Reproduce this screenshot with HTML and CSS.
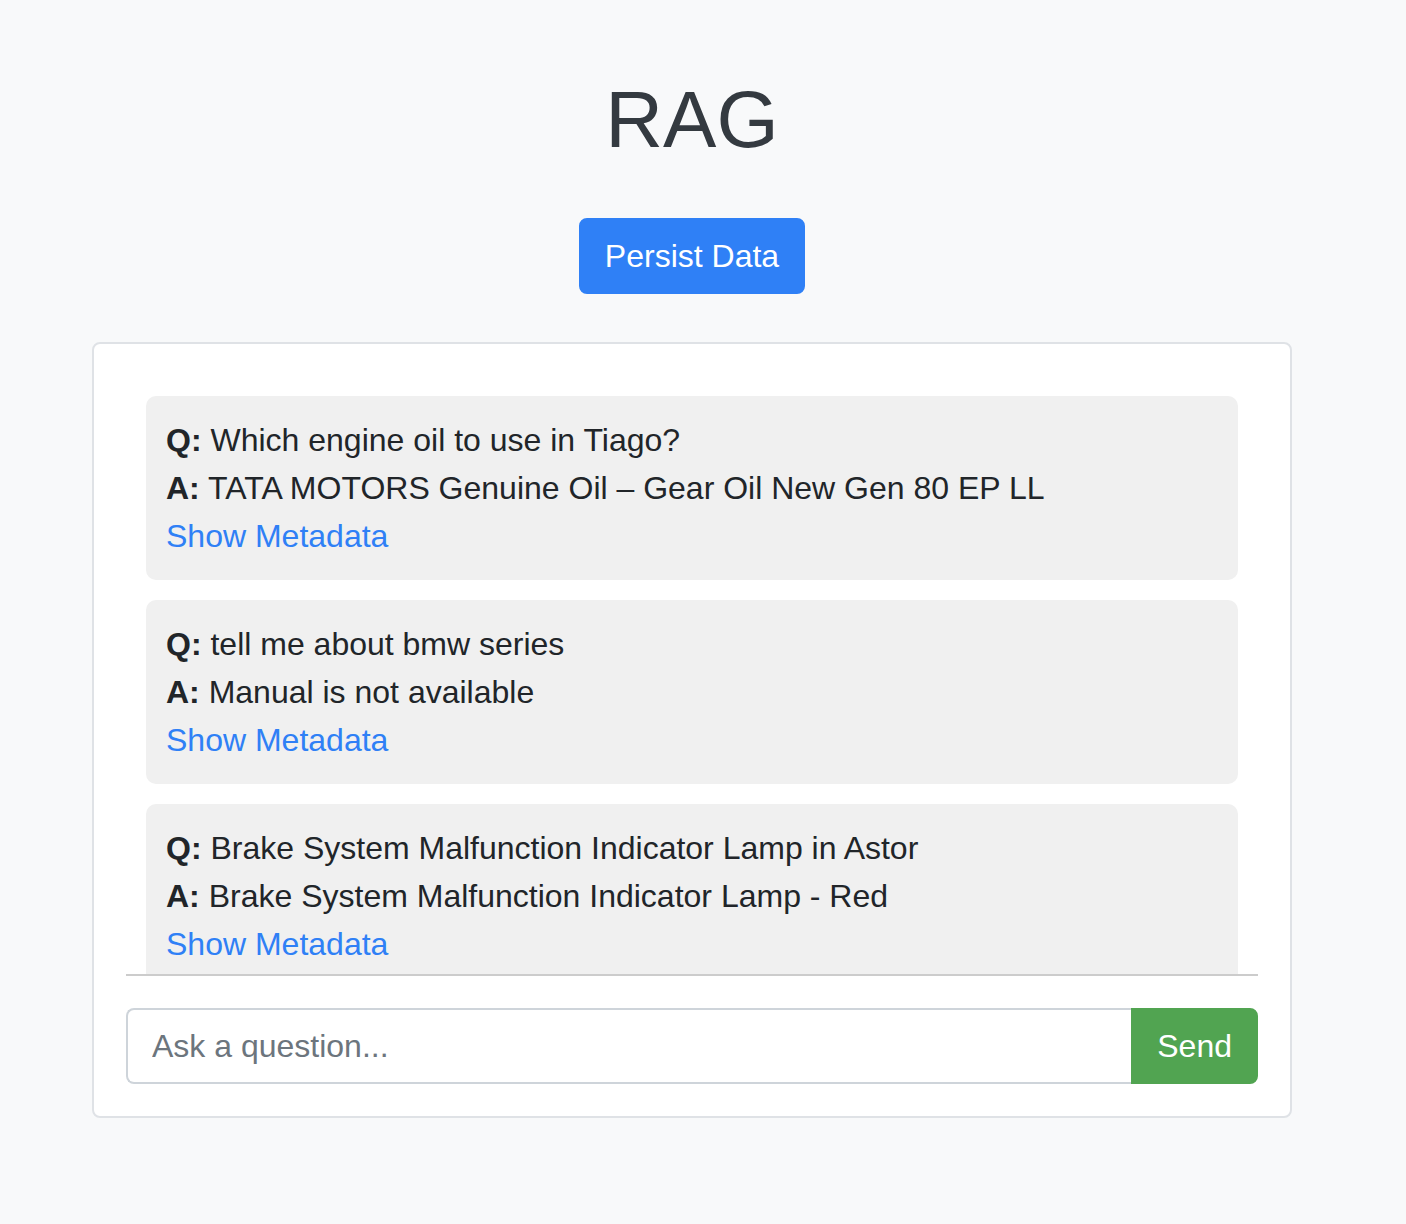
FILE: index.html
```html
<!DOCTYPE html>
<html lang="en">
<head>
<meta charset="utf-8">
<title>RAG</title>
<link rel="stylesheet" href="styles.css">
</head>
<body>
<div class="container">
  <h1 class="title">RAG</h1>
  <div class="actions">
    <button class="btn btn-primary">Persist Data</button>
  </div>
  <div class="card">
    <div class="chat">
      <div class="msg">
        <div class="line"><strong>Q:</strong> Which engine oil to use in Tiago?</div>
        <div class="line"><strong>A:</strong> TATA MOTORS Genuine Oil – Gear Oil New Gen 80 EP LL</div>
        <a class="meta-link" href="#">Show Metadata</a>
      </div>
      <div class="msg">
        <div class="line"><strong>Q:</strong> tell me about bmw series</div>
        <div class="line"><strong>A:</strong> Manual is not available</div>
        <a class="meta-link" href="#">Show Metadata</a>
      </div>
      <div class="msg">
        <div class="line"><strong>Q:</strong> Brake System Malfunction Indicator Lamp in Astor</div>
        <div class="line"><strong>A:</strong> Brake System Malfunction Indicator Lamp - Red</div>
        <a class="meta-link" href="#">Show Metadata</a>
      </div>
    </div>
    <div class="input-group">
      <input class="form-control" type="text" placeholder="Ask a question...">
      <button class="btn btn-success">Send</button>
    </div>
  </div>
</div>
</body>
</html>
```
FILE: styles.css
```css
* { box-sizing: border-box; }
html, body {
  margin: 0;
  padding: 0;
  background: #f8f9fa;
  font-family: "Liberation Sans", Arial, Helvetica, sans-serif;
  font-size: 32px;
  line-height: 1.5;
  color: #212529;
}
.container {
  width: 1200px;
  margin-left: 92px;
  padding-top: 72px;
}
.title {
  margin: 0;
  text-align: center;
  font-size: 80px;
  font-weight: 500;
  line-height: 96px;
  color: #343a40;
}
.actions {
  display: flex;
  justify-content: center;
  margin-top: 50px;
  margin-bottom: 48px;
}
.btn {
  font-family: inherit;
  font-size: 32px;
  line-height: 48px;
  padding: 12px 24px;
  border: 2px solid transparent;
  border-radius: 8px;
  color: #fff;
  cursor: pointer;
}
.btn-primary {
  background: #2f80f6;
  border-color: #2f80f6;
}
.btn-success {
  background: #51a451;
  border-color: #51a451;
  border-radius: 0 8px 8px 0;
}
.card {
  background: #fff;
  border: 2px solid #dfe2e6;
  border-radius: 8px;
  padding: 32px;
}
.chat {
  height: 600px;
  overflow-y: auto;
  scrollbar-width: none;
  padding: 20px;
  border-bottom: 2px solid #cccccc;
  display: flex;
  flex-direction: column;
  gap: 20px;
}
.chat::-webkit-scrollbar { display: none; }
.msg {
  flex: none;
  background: #f0f0f0;
  border-radius: 10px;
  padding: 20px;
}
.line { line-height: 48px; }
.line strong { font-weight: 700; }
.meta-link {
  color: #2f80f6;
  text-decoration: none;
  line-height: 48px;
}
.input-group {
  display: flex;
  margin-top: 32px;
}
.form-control {
  flex: 1;
  min-width: 0;
  font-family: inherit;
  font-size: 32px;
  line-height: 48px;
  padding: 12px 24px;
  border: 2px solid #ced4da;
  border-right: none;
  border-radius: 8px 0 0 8px;
  color: #495057;
  background: #fff;
  outline: none;
}
.form-control::placeholder { color: #6c757d; }
```
